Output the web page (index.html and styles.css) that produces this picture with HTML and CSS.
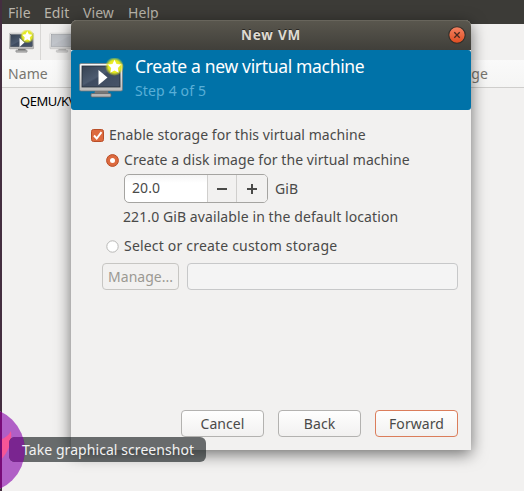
FILE: index.html
```html
<!DOCTYPE html>
<html lang="en">
<head>
<meta charset="utf-8">
<title>New VM</title>
<link rel="stylesheet" href="styles.css">
</head>
<body>
<svg width="0" height="0" class="defs">
  <defs>
    <linearGradient id="screen" x1="0" y1="0" x2="1" y2="1"><stop offset="0" stop-color="#364252"/><stop offset=".45" stop-color="#4d5b70"/><stop offset=".5" stop-color="#3e4b60"/><stop offset="1" stop-color="#475469"/></linearGradient>
    <linearGradient id="frame" x1="0" y1="0" x2="0" y2="1"><stop offset="0" stop-color="#fafafa"/><stop offset="1" stop-color="#b9b9b9"/></linearGradient>
    <radialGradient id="glow"><stop offset="0" stop-color="#fff75a"/><stop offset=".65" stop-color="#e2e81c"/><stop offset="1" stop-color="#dfe51c" stop-opacity="0"/></radialGradient>
    <symbol id="monitor" viewBox="0 0 46 42">
      <path d="M17 33h13l1 4H16z" fill="#777"/>
      <rect x="13" y="35.500" width="20" height="3.500" rx="1" fill="#b5b5b5" stroke="#666" stroke-width=".8"/>
      <rect x="1.500" y="5.500" width="43" height="27.500" rx="1.500" fill="url(#frame)" stroke="#777" stroke-width=".7"/>
      <rect x="4" y="8" width="38" height="21" fill="url(#screen)" stroke="#252d39" stroke-width=".8"/>
    </symbol>
    <symbol id="star" viewBox="0 0 20 20">
      <circle cx="10" cy="10" r="10" fill="url(#glow)"/>
      <path d="M10 2.800l2.100 4.500 5 .7-3.600 3.500.9 5-4.400-2.400-4.400 2.400.9-5L2.900 8l5-.7z" fill="#fff"/>
    </symbol>
  </defs>
</svg>
<div class="desktop">
  <nav class="menubar"><span class="m-file">File</span><span class="m-edit">Edit</span><span class="m-view">View</span><span class="m-help">Help</span></nav>
  <div class="toolbar">
    <div class="tool first">
      <svg width="26" height="24" viewBox="0 0 26 24"><use href="#monitor" x="-.5" y="0" width="26" height="24"/><path d="M10.500 8v9l5-4.500z" fill="#fff"/><use href="#star" x="11" y="-1" width="14.500" height="14.500"/></svg>
    </div>
    <div class="tool second"><svg width="26" height="24" class="dim"><use href="#monitor" width="26" height="24"/><rect x="2.500" y="5" width="21" height="11.500" fill="#fff" opacity=".4"/></svg></div>
  </div>
  <div class="list-head"><span class="name">Name</span><span class="usage">CPU usage</span></div>
  <div class="row"><span>QEMU/KVM</span></div>
</div>
<div class="edge"></div>

<main class="dialog">
  <header class="titlebar">
    <span>New VM</span>
    <svg class="close" width="18" height="18" viewBox="0 0 18 18"><defs><linearGradient id="red" x2="0" y2="1"><stop stop-color="#f48363"/><stop offset="1" stop-color="#df4c20"/></linearGradient></defs><circle cx="9" cy="9" r="8.200" fill="url(#red)" stroke="#302e29" stroke-width="1.100"/><path d="M6.300 6.300l5.400 5.400m0-5.400l-5.400 5.400" stroke="#47281e" stroke-width="1.300"/></svg>
  </header>
  <section class="banner">
    <svg width="46" height="42" viewBox="0 0 46 42"><use href="#monitor" x="0" width="46" height="42"/><path d="M20.500 12v15l9-7.500z" fill="#fff"/><use href="#star" x="27" y="-1" width="19" height="19"/></svg>
    <div class="heads"><h1><span>Create a new virtual machine</span></h1><p><span>Step 4 of 5</span></p></div>
  </section>
  <section class="body">
    <label class="enable"><svg width="13" height="13"><rect x=".5" y=".5" width="12" height="12" rx="2" fill="#dd6a3f" stroke="#b94f28"/><path d="M3 6.500l2.700 3 4.800-6.300" fill="none" stroke="#fff" stroke-width="2"/></svg><span>Enable storage for this virtual machine</span></label>
    <label class="create"><svg width="13" height="13"><circle cx="6.500" cy="6.500" r="5.900" fill="#dd6a3f" stroke="#b94f28"/><circle cx="6.500" cy="6.500" r="2.500" fill="#fff"/></svg><span>Create a disk image for the virtual machine</span></label>
    <div class="size">
      <div class="spin"><div class="value"><span>20.0</span></div><div class="step"><svg width="10" height="10"><path d="M0 5h10" stroke="#4a4a48" stroke-width="2"/></svg></div><div class="step plus"><svg width="10" height="10"><path d="M0 5h10M5 0v10" stroke="#4a4a48" stroke-width="2"/></svg></div></div>
      <span class="unit">GiB</span>
    </div>
    <div class="available"><span>221.0 GiB available in the default location</span></div>
    <label class="custom"><svg width="13" height="13"><circle cx="6.500" cy="6.500" r="5.700" fill="#fff" stroke="#b8b8b6"/></svg><span>Select or create custom storage</span></label>
    <div class="path"><div class="manage"><span>Manage...</span></div><div class="entry"></div></div>
  </section>
  <footer class="actions"><button><span class="b-cancel">Cancel</span></button><button><span class="b-back">Back</span></button><button class="suggested"><span class="b-forward">Forward</span></button></footer>
</main>

<svg class="badge" width="26" height="82" viewBox="0 0 26 82"><circle cx="-18" cy="41" r="42.800" fill="#b05fc6"/><path d="M0 31Q8 28 11 22Q13 38 0 52z" fill="#f65597"/><path d="M0 3h2v76H0z" fill="#780b78"/></svg>
<div class="tooltip">
  <svg class="overlap" width="16" height="25" viewBox="9 28 16 25"><circle cx="-18" cy="41" r="42.800" fill="#7a2590"/></svg>
  <span>Take graphical screenshot</span>
</div>
</body>
</html>
```

FILE: styles.css
```css
* { box-sizing: border-box; }
body { margin: 0; width: 524px; height: 491px; overflow: hidden; background: #f2f1f0; color: #4a4a49; font: 14px/20px "Noto Sans", "Open Sans", sans-serif; letter-spacing: .07px; }
span { white-space: nowrap; }
svg { display: block; flex: none; }
.defs { position: absolute; }
.desktop { height: 491px; padding-left: 2px; }
.menubar { height: 24px; margin-left: -2px; padding: 3px 0 0 8px; display: flex; background: #3c3b37; color: #b9b5ab; }
.menubar span { flex: none; }
.m-file { width: 36px; }
.m-edit { width: 39px; }
.m-view { width: 45px; }
.toolbar { height: 36px; display: flex; background: #f2f1f0; }
.tool { display: flex; align-items: center; }
.first { width: 39px; padding-left: 7px; border-right: 1px solid #d8d7d5; }
.second { padding-left: 8px; }
.dim { opacity: .5; }
.list-head { height: 28px; padding: 4px 36px 0 6px; display: flex; justify-content: space-between; background: linear-gradient(#fafafa, #f5f5f4); border-bottom: 1px solid #cfcecc; color: #77756f; }
.row { height: 26px; padding: 3px 0 0 18px; color: #000; font-size: 13px; letter-spacing: -.5px; }
.edge { position: absolute; left: 0; top: 0; width: 2px; height: 491px; background: #442e40; }
.dialog { position: absolute; left: 71px; top: 20px; width: 400px; height: 430px; display: flex; flex-direction: column; background: #f2f1f0; border-radius: 6px 6px 0 0; box-shadow: 0 4px 16px rgba(0,0,0,.55); }
.titlebar { height: 30px; display: flex; align-items: center; justify-content: center; position: relative; border-radius: 6px 6px 0 0; background: linear-gradient(#5a574e, #403f3a); box-shadow: inset 0 1px #68655c; color: #dfdbd2; font-weight: 700; font-size: 13.500px; letter-spacing: .8px; text-shadow: 0 -1px #292824; }
.close { position: absolute; right: 5px; top: 6px; }
.banner { height: 60px; padding: 8px 0 0 7px; display: flex; gap: 11px; border-radius: 3px; background: #0072a8; }
h1, p { margin: 0; font-weight: 400; }
h1 { height: 24px; margin-top: -4px; color: #fff; font-size: 17.500px; line-height: 24px; letter-spacing: -.33px; }
p { color: #59afd7; line-height: 25px; letter-spacing: .15px; }
.body { height: 300px; padding: 15px 13px 0 20px; display: flex; flex-direction: column; }
.body label { display: flex; align-items: center; gap: 5px; }
.enable { height: 20px; }
.create { height: 20px; margin: 5px 0 0 15px; }
.size { height: 29px; margin: 4px 0 0 33px; display: flex; align-items: center; gap: 7px; }
.spin { width: 144px; height: 29px; display: flex; border: 1px solid #a5a4a1; border-radius: 5px; overflow: hidden; background: linear-gradient(#f5f5f5, #fff 30%); }
.value { width: 82px; padding: 3px 0 0 7px; }
.step { width: 29px; border-left: 1px solid #d0cfcd; display: flex; align-items: center; justify-content: center; background: #f2f1f0; }
.plus { width: 31px; }
.available { height: 20px; margin: 4px 0 0 32px; letter-spacing: .09px; }
.custom { height: 20px; margin: 9px 0 0 15px; letter-spacing: .19px; }
.path { height: 27px; margin: 7px 0 0 11px; display: flex; gap: 8px; }
.manage { width: 77px; border: 1px solid #c7c6c3; border-radius: 4px; color: #9b9993; text-align: center; line-height: 25px; letter-spacing: 0; }
.entry { flex: 1; border: 1px solid #c7c8c9; border-radius: 4px; background: #f4f4f4; }
.actions { height: 40px; padding-right: 13px; display: flex; justify-content: flex-end; gap: 14px; }
.actions button { width: 83px; height: 27px; padding: 0; border: 1px solid #b3b2b0; border-radius: 4px; background: linear-gradient(#fefefe, #f2f1f0); color: inherit; font: inherit; letter-spacing: inherit; }
.actions .suggested { border-color: #db7d5b; }
.badge { position: absolute; left: 0; top: 409px; }
.tooltip { position: absolute; left: 9px; top: 437px; width: 197px; height: 25px; padding: 3px 0 0 13px; border-radius: 6px; overflow: hidden; background: rgba(32,38,40,.66); color: #f2f2f2; }
.overlap { position: absolute; left: 0; top: 0; }
.tooltip span { position: relative; }
```
